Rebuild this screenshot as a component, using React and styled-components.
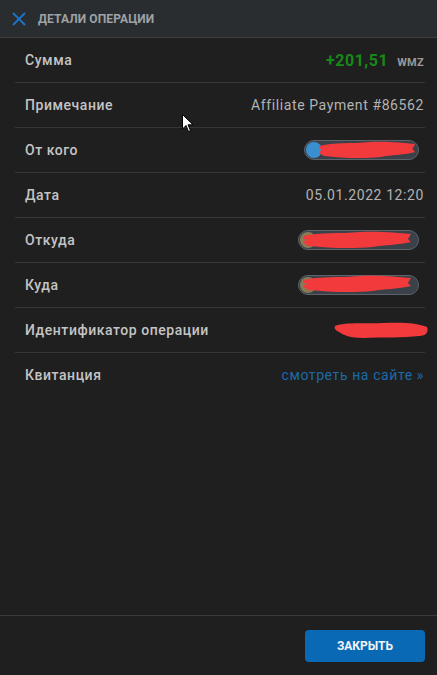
import React from 'react';
import styled, { createGlobalStyle } from 'styled-components';

const Global = createGlobalStyle`
  html, body { margin: 0; padding: 0; background: #1f1f1f; }
  body { font-family: Roboto, "Noto Sans", sans-serif; }
`;

const Dialog = styled.div`
  width: 437px;
  height: 675px;
  display: flex;
  flex-direction: column;
  background: #1f1f1f;
  position: relative;
  overflow: hidden;
`;

const Header = styled.div`
  height: 37px;
  display: flex;
  align-items: center;
  gap: 12px;
  padding-left: 12px;
  background: #2a2d30;
  border-bottom: 1px solid #3a3c3f;
`;

const Title = styled.div`
  font-size: 12px;
  font-weight: 700;
  color: #9ea2a6;
  letter-spacing: 0.1px;
  padding-top: 1px;
`;

const Body = styled.div`
  flex: 1;
  padding: 0 12px 0 15px;
`;

const Row = styled.div`
  height: 44px;
  display: flex;
  align-items: center;
  justify-content: space-between;
  padding: 0 1px 0 10px;
  border-bottom: ${(p) => (p.last ? 'none' : '1px solid #363636')};
`;

const Label = styled.div`
  font-size: 14px;
  color: #c4c4c4;
  font-weight: 500;
  letter-spacing: 0.55px;
`;

const Value = styled.div`
  font-size: 14px;
  color: #b3b3b3;
  letter-spacing: 0.6px;
  display: flex;
  align-items: baseline;
  gap: 9px;
`;

const Amount = styled.span`
  font-size: 16px;
  font-weight: 700;
  color: #168a18;
  letter-spacing: 0.5px;
`;

const Currency = styled.span`
  font-size: 11px;
  font-weight: 700;
  color: #9a9a9a;
  letter-spacing: 0.3px;
`;

const Link = styled.a`
  font-size: 14px;
  color: #1d6aa8;
  letter-spacing: 0.6px;
  text-decoration: none;
`;

const Pill = styled.div`
  position: relative;
  width: ${(p) => p.w}px;
  height: 18px;
  border-radius: 10px;
  background: #3b4148;
  border: 1px solid #5c636b;
  display: flex;
  align-items: center;
  margin-right: ${(p) => p.mr || 0}px;
`;

const Avatar = styled.div`
  width: 16px;
  height: 16px;
  border-radius: 50%;
  margin-left: 1px;
  background: ${(p) => p.bg};
`;

const Scribble = styled.svg`
  position: absolute;
  left: ${(p) => p.l}px;
  top: ${(p) => p.t}px;
`;

const Footer = styled.div`
  height: 59px;
  border-top: 1px solid #3a3a3a;
  display: flex;
  align-items: center;
  justify-content: flex-end;
  padding-right: 12px;
`;

const Button = styled.button`
  width: 120px;
  height: 32px;
  border: none;
  border-radius: 4px;
  background: #0a69b4;
  color: #f0f4f8;
  font-family: Roboto, sans-serif;
  font-size: 12px;
  font-weight: 700;
  margin-top: 1px;
`;

const Cursor = styled.svg`
  position: absolute;
  left: 182px;
  top: 114px;
`;

const RedMark = ({ w = 110, l = 4, t = -3 }) => (
  <Scribble l={l} t={t} width={w} height="22" viewBox="0 0 110 22" preserveAspectRatio="none">
    <path
      d="M3 7 C18 3 38 5 58 3 C78 2 95 4 108 5 L105 10 L108 13 C96 16 82 16 70 18 C50 20 26 19 8 17 C2 15 1 12 6 11 C2 10 1 8 3 7 Z"
      fill="#f23a3c"
    />
  </Scribble>
);

const CloseIcon = () => (
  <svg width="14" height="14" viewBox="0 0 14 14">
    <path d="M1 1 L13 13 M13 1 L1 13" stroke="#1c72c4" strokeWidth="2" />
  </svg>
);

const App = () => (
  <>
    <Global />
    <Dialog>
      <Header>
        <CloseIcon />
        <Title>ДЕТАЛИ ОПЕРАЦИИ</Title>
      </Header>
      <Body>
        <Row>
          <Label>Сумма</Label>
          <Value>
            <Amount>+201,51</Amount>
            <Currency>WMZ</Currency>
          </Value>
        </Row>
        <Row>
          <Label>Примечание</Label>
          <Value>Affiliate Payment #86562</Value>
        </Row>
        <Row>
          <Label>От кого</Label>
          <Pill w={113} mr={5}>
            <Avatar bg="#3a8fd0" />
            <RedMark w={100} l={12} t={-2} />
          </Pill>
        </Row>
        <Row>
          <Label>Дата</Label>
          <Value>05.01.2022 12:20</Value>
        </Row>
        <Row>
          <Label>Откуда</Label>
          <Pill w={119} mr={5}>
            <Avatar bg="#8a7a55" />
            <RedMark w={112} l={2} t={-2} />
          </Pill>
        </Row>
        <Row>
          <Label>Куда</Label>
          <Pill w={119} mr={5}>
            <Avatar bg="#8a7a55" />
            <RedMark w={112} l={2} t={-3} />
          </Pill>
        </Row>
        <Row>
          <Label>Идентификатор операции</Label>
          <svg width="96" height="18" viewBox="0 0 96 18" style={{ marginRight: -5 }}>
            <path
              d="M2 5 C12 1 30 3 50 2 C70 1 85 2 94 6 C96 11 93 15 86 15 C70 17 50 16 30 17 C18 17 10 14 6 11 C2 9 1 7 2 5 Z"
              fill="#f23a3c"
            />
          </svg>
        </Row>
        <Row last>
          <Label>Квитанция</Label>
          <Link>смотреть на сайте »</Link>
        </Row>
      </Body>
      <Footer>
        <Button>ЗАКРЫТЬ</Button>
      </Footer>
      <Cursor width="12" height="19" viewBox="0 0 12 19">
        <path d="M0.5 0.5 L0.5 15 L4 11.5 L6.5 17.5 L8.5 16.5 L6 10.8 L11 10.8 Z" fill="#fff" stroke="#000" strokeWidth="1" />
      </Cursor>
    </Dialog>
  </>
);

export default App;
